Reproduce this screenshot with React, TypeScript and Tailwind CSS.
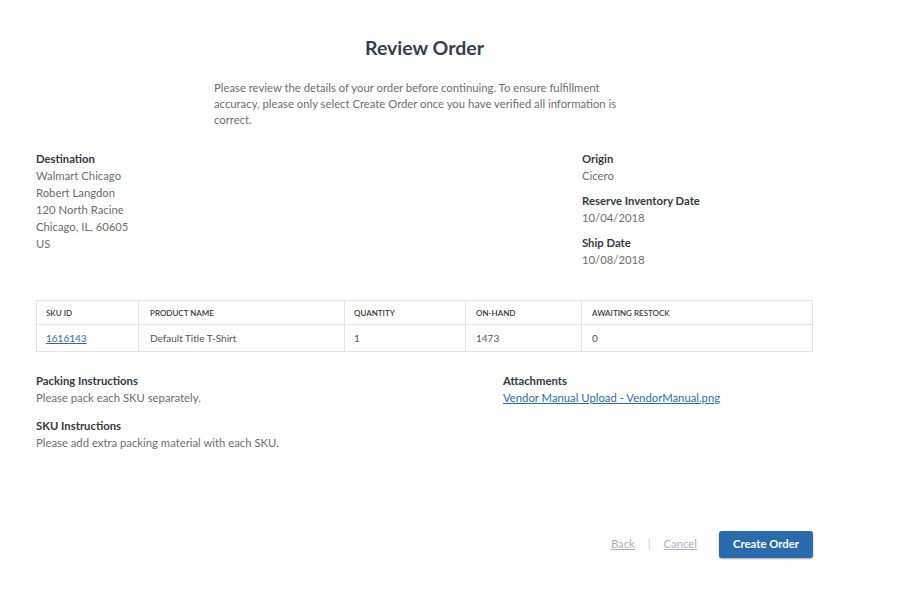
import React from 'react';

const rows = [
  { sku: '1616143', name: 'Default Title T-Shirt', qty: '1', onHand: '1473', restock: '0' },
];

function Field({ label, children }: { label: string; children: React.ReactNode }) {
  return (
    <div>
      <div className="text-[11.3px] font-bold leading-[17px] text-[#333a42]">{label}</div>
      <div className="text-[11.3px] leading-[17px] text-[#6e6e6e]">{children}</div>
    </div>
  );
}

export default function App() {
  return (
    <div className="min-h-[592px] w-[922px] bg-white font-['Lato',sans-serif]">
      <div className="ml-[36px] w-[777px] pt-[36px]">
        <h1 className="text-center text-[19.5px] font-bold leading-[24px] text-[#35404c]">Review Order</h1>

        <p className="ml-[178px] mt-[20px] w-[410px] text-[11.3px] leading-[16px] text-[#6e6e6e]">
          Please review the details of your order before continuing. To ensure fulfillment accuracy, please
          only select Create Order once you have verified all information is correct.
        </p>

        <div className="mt-[22px] flex">
          <div className="w-[546px]">
            <Field label="Destination">
              <div>Walmart Chicago</div>
              <div>Robert Langdon</div>
              <div>120 North Racine</div>
              <div>Chicago, IL, 60605</div>
              <div>US</div>
            </Field>
          </div>
          <div className="flex flex-col gap-[8px]">
            <Field label="Origin">Cicero</Field>
            <Field label="Reserve Inventory Date">10/04/2018</Field>
            <Field label="Ship Date">10/08/2018</Field>
          </div>
        </div>

        <table className="mt-[32px] w-full border-collapse border border-[#e4e4e4] text-left">
          <thead>
            <tr className="h-[24px] text-[8px] font-semibold uppercase text-[#3a3a3a]">
              <th className="w-[102px] border-r border-[#e4e4e4] pl-[9px] font-semibold">SKU ID</th>
              <th className="w-[206px] border-r border-[#e4e4e4] pl-[11px] font-semibold">Product Name</th>
              <th className="w-[121px] border-r border-[#e4e4e4] pl-[9px] font-semibold">Quantity</th>
              <th className="w-[116px] border-r border-[#e4e4e4] pl-[10px] font-semibold">On-Hand</th>
              <th className="pl-[10px] font-semibold">Awaiting Restock</th>
            </tr>
          </thead>
          <tbody>
            {rows.map((r) => (
              <tr key={r.sku} className="h-[27px] border-t border-[#e4e4e4] text-[10px] text-[#555]">
                <td className="border-r border-[#e4e4e4] pl-[9px]">
                  <a href="#" className="text-[#2f6aa8] underline">{r.sku}</a>
                </td>
                <td className="border-r border-[#e4e4e4] pl-[11px]">{r.name}</td>
                <td className="border-r border-[#e4e4e4] pl-[9px]">{r.qty}</td>
                <td className="border-r border-[#e4e4e4] pl-[10px]">{r.onHand}</td>
                <td className="pl-[10px]">{r.restock}</td>
              </tr>
            ))}
          </tbody>
        </table>

        <div className="mt-[20px] flex">
          <div className="flex w-[467px] flex-col gap-[11px]">
            <Field label="Packing Instructions">Please pack each SKU separately.</Field>
            <Field label="SKU Instructions">Please add extra packing material with each SKU.</Field>
          </div>
          <div>
            <Field label="Attachments">
              <a href="#" className="text-[#2f6aa8] underline">Vendor Manual Upload - VendorManual.png</a>
            </Field>
          </div>
        </div>

        <div className="mt-[80px] flex items-center justify-end">
          <a href="#" className="text-[11.3px] text-[#a9b3bd] underline">Back</a>
          <span className="mx-[13px] text-[11px] text-[#c3c9cf]">|</span>
          <a href="#" className="text-[11.3px] text-[#a9b3bd] underline">Cancel</a>
          <button className="ml-[22px] h-[27px] w-[94px] rounded-[3px] bg-[#2a6cab] text-[11.3px] font-bold text-white shadow-[0_1px_2px_rgba(0,0,0,0.35)]">
            Create Order
          </button>
        </div>
      </div>
    </div>
  );
}
